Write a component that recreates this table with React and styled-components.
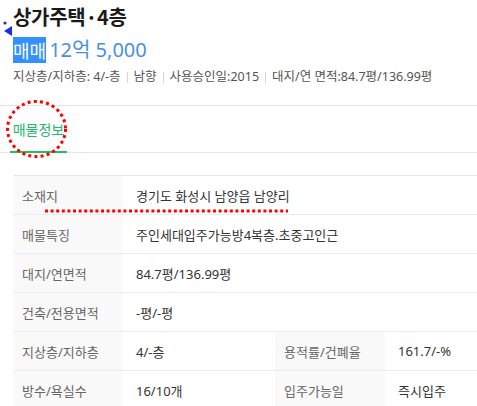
import React from "react";
import styled, { createGlobalStyle } from "styled-components";

const Global = createGlobalStyle`
  html, body { margin: 0; padding: 0; background: #fff; }
  body { font-family: "Noto Sans", "Noto Sans CJK KR", sans-serif; color: #222; }
  * { box-sizing: border-box; }
`;

const Page = styled.div`
  position: relative;
  width: 477px;
  height: 406px;
  overflow: hidden;
`;

const Header = styled.div`
  padding: 4px 0 0 13px;
  display: flex;
  flex-direction: column;
`;

const Title = styled.h1`
  margin: 0;
  font-family: "Noto Sans CJK KR", sans-serif;
  font-size: 20px;
  line-height: 26px;
  font-weight: 700;
  color: #1a1a1a;
  letter-spacing: -0.3px;
`;

const Price = styled.div`
  margin-top: 7px;
  display: flex;
  align-items: center;
  font-size: 20px;
  line-height: 26px;
  color: #4a8fe2;
`;

const Deal = styled.span`
  background: #3390ff;
  color: #fff;
  font-family: "Noto Sans CJK KR", sans-serif;
  font-size: 18px;
  margin-right: 3px;
`;

const Info = styled.div`
  margin-top: 5px;
  font-size: 12.5px;
  line-height: 18px;
  color: #555;
  display: flex;
  align-items: center;
  white-space: nowrap;
`;

const Sep = styled.span`
  display: inline-block;
  width: 1px;
  height: 11px;
  background: #d6d6d6;
  margin: 0 6px;
`;

const TabBar = styled.div`
  margin-top: 19px;
  border-top: 1px solid #e5e5e5;
  border-bottom: 1px solid #e5e5e5;
  height: 48px;
  padding-left: 10px;
  display: flex;
  align-items: stretch;
`;

const Tab = styled.div`
  width: 57px;
  display: flex;
  align-items: center;
  justify-content: center;
  font-size: 14px;
  color: ${(p) => (p.$active ? "#25b86a" : "#666")};
  border-bottom: 2px solid ${(p) => (p.$active ? "#1fc25e" : "transparent")};
  margin-bottom: -1px;
  padding-top: 1px;
`;

const Table = styled.div`
  margin: 22px 0 0 13px;
  border-top: 1px solid #e8e8e8;
  display: grid;
  grid-template-columns: 110px 152px 110px 1fr;
`;

const Label = styled.div`
  height: 39px;
  border-bottom: 1px solid #ececec;
  background: #f9f9f9;
  padding-left: 9px;
  display: flex;
  align-items: center;
  font-size: 13px;
  color: #666;
`;

const Value = styled.div`
  height: 39px;
  border-bottom: 1px solid #ececec;
  padding-left: 13px;
  display: flex;
  align-items: center;
  font-size: 13px;
  color: #333;
  grid-column: ${(p) => (p.$wide ? "span 3" : "span 1")};
`;

const Overlay = styled.svg`
  position: absolute;
  left: 0;
  top: 0;
  pointer-events: none;
`;

const rows = [
  [["소재지", "경기도 화성시 남양읍 남양리"]],
  [["매물특징", "주인세대입주가능방4복층.초중고인근"]],
  [["대지/연면적", "84.7평/136.99평"]],
  [["건축/전용면적", "-평/-평"]],
  [["지상층/지하층", "4/-층"], ["용적률/건폐율", "161.7/-%"]],
  [["방수/욕실수", "16/10개"], ["입주가능일", "즉시입주"]],
];

const infos = ["지상층/지하층: 4/-층", "남향", "사용승인일:2015", "대지/연 면적:84.7평/136.99평"];

export default function App() {
  return (
    <Page>
      <Global />
      <Header>
        <Title>상가주택·4층</Title>
        <Price>
          <Deal>매매</Deal>12억 5,000
        </Price>
        <Info>
          {infos.map((t, i) => (
            <React.Fragment key={t}>
              {i > 0 && <Sep />}
              <span>{t}</span>
            </React.Fragment>
          ))}
        </Info>
      </Header>
      <TabBar>
        <Tab $active>매물정보</Tab>
      </TabBar>
      <Table>
        {rows.map((row, ri) =>
          row.map(([l, v], ci) => (
            <React.Fragment key={`${ri}-${ci}`}>
              <Label>{l}</Label>
              <Value $wide={row.length === 1}>{v}</Value>
            </React.Fragment>
          ))
        )}
      </Table>
      <Overlay width="477" height="406">
        <circle cx="5" cy="23" r="1.6" fill="#1a2ee8" />
        <polygon points="4,31 12,26 12,36" fill="#1a2ee8" />
        <ellipse
          cx="36.5"
          cy="129"
          rx="29"
          ry="27.5"
          fill="none"
          stroke="#f00"
          strokeWidth="3"
          strokeDasharray="3 3.2"
        />
        <line
          x1="45"
          y1="211"
          x2="288"
          y2="211"
          stroke="#f00"
          strokeWidth="3"
          strokeDasharray="3 2.6"
        />
      </Overlay>
    </Page>
  );
}
